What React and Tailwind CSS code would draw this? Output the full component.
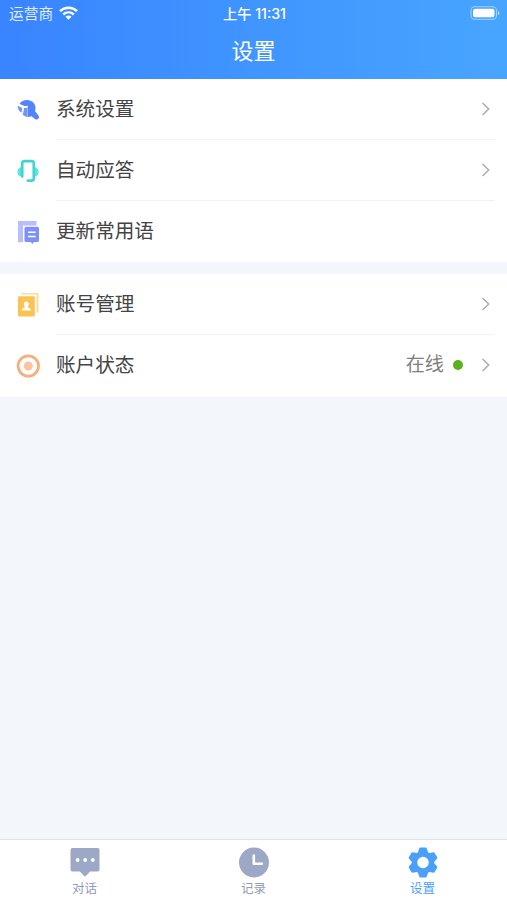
import React from "react";

const SystemIcon = () => (
  <svg width="24" height="24" viewBox="0 0 24 24">
    <path d="M3.5 6C6 1.6 12.2.6 16.2 3.6c3.2 2.4 4 6 2.8 9.4l3.4 4.4c1.9 2.6-1.1 5.4-3.5 3.6l-3.4-2.7c-1.2.6-2.6.9-4 .8V9.3Z" fill="#5584fa" />
    <path d="M1.6 7.8l4.6 2.1-.6 4.9c-2.600-1.400-3.900-4-4-7ZM7.600 10.300l3.500-.9v9.500c-1.900-.2-3.400-1.100-4.500-2.300Z" fill="#6d96fb" />
    <path d="M3 6.500l5.300 2.500 3.500-.5M7.400 9.200l-.9 6.300" stroke="#fff" strokeWidth="1.300" fill="none" />
  </svg>
);

const HeadsetIcon = () => (
  <svg width="24" height="24" viewBox="0 0 24 24">
    <path d="M5.300 8.200C2.700 8.600 1.400 10.300 1.400 13s1.300 4.200 3.900 4.500ZM18.700 8.200c2.600.4 3.900 2.100 3.900 4.800s-1.300 4.200-3.900 4.500Z" fill="#62e3e1" />
    <path d="M6.200 17.500V4.400c0-1.400.8-2.200 2.200-2.200h7.200c1.400 0 2.200.8 2.200 2.200v14.800c0 1.500-.8 2.400-2.300 2.400h-3.700" fill="none" stroke="#3dd6d5" strokeWidth="2.700" strokeLinecap="round" />
  </svg>
);

const PhraseIcon = () => (
  <svg width="24" height="24" viewBox="0 0 24 24">
    <path d="M2 1h18.500v4.500H7V22.300H2Z" fill="#b5bffb" />
    <path d="M10 6.800h11.500a1.500 1.500 0 0 1 1.500 1.500v12.200a1.500 1.500 0 0 1-1.500 1.500h-3.600L16.500 24l-1.800-2H10a1.500 1.500 0 0 1-1.500-1.500V8.300A1.500 1.500 0 0 1 10 6.800Z" fill="#7f90f8" />
    <path d="M12 12.300h7.600M12 16.600h7.600" stroke="#fff" strokeWidth="1.500" />
  </svg>
);

const AccountIcon = () => (
  <svg width="24" height="24" viewBox="0 0 24 24">
    <path d="M5.500.5h16v19" fill="none" stroke="#fddb9a" strokeWidth="2" />
    <rect x="2" y="3.300" width="16.800" height="20.300" rx="1" fill="#fbc352" />
    <circle cx="10.300" cy="11" r="2.500" fill="#fff" />
    <path d="M9 12h2.600l.5 2.600c1.900.6 2.800 1.500 2.800 3H5.800c0-1.500.9-2.400 2.700-3Z" fill="#fff" />
  </svg>
);

const StatusIcon = () => (
  <svg width="24" height="24" viewBox="0 0 24 24">
    <circle cx="12.300" cy="12" r="10.200" fill="none" stroke="#f8ae7b" strokeWidth="2.700" />
    <circle cx="12.300" cy="12" r="4.500" fill="#fbc29d" />
  </svg>
);

const Chevron = () => (
  <svg width="10" height="14" viewBox="0 0 10 14" className="shrink-0">
    <path d="M1.500 1.100L7.700 7l-6.200 5.900" fill="none" stroke="#aaa" strokeWidth="1.400" />
  </svg>
);

const DialogIcon = () => (
  <svg width="32" height="32" viewBox="0 0 32 32">
    <path d="M3.500 2h25a2 2 0 0 1 2 2v19.500a2 2 0 0 1-2 2h-7.300L16 30.800l-5.200-5.300H3.500a2 2 0 0 1-2-2V4a2 2 0 0 1 2-2Z" fill="#9ca8c5" />
    <circle cx="8.600" cy="14" r="1.900" fill="#fff" />
    <circle cx="16.200" cy="14" r="1.900" fill="#fff" />
    <circle cx="23.800" cy="14" r="1.900" fill="#fff" />
  </svg>
);

const ClockIcon = () => (
  <svg width="32" height="32" viewBox="0 0 32 32">
    <circle cx="16" cy="16.500" r="15" fill="#9ca8c5" />
    <path d="M15.800 9.500v8.200h8" fill="none" stroke="#fff" strokeWidth="2.600" strokeLinecap="round" strokeLinejoin="round" />
  </svg>
);

const GearIcon = () => (
  <svg width="32" height="32" viewBox="0 0 32 32">
    <g transform="translate(16 16.500)" fill="#4a9ffa">
      <circle r="8.500" fill="none" stroke="#4a9ffa" strokeWidth="5.500" />
      {[0, 60, 120, 180, 240, 300].map((angle) => (
        <path key={angle} transform={`rotate(${angle})`} d="M-5.600-8.500L-3.800-13.900Q-3.500-14.900-2.500-14.900H2.500Q3.500-14.900 3.800-13.900L5.600-8.500Z" />
      ))}
    </g>
  </svg>
);

function Row({ icon, label, status, chevron = true, divider = true }) {
  return (
    <div className="flex h-[61px] items-center pl-4">
      {icon}
      <div className={`ml-4 mr-3 flex h-full flex-1 items-center border-b pr-1 ${divider ? "border-[#f2f2f2]" : "border-transparent"}`}>
        <span className="flex-1 text-[19.600px] leading-6 text-[#444]">{label}</span>
        {status && (
          <span className="mr-[18px] flex items-center gap-[9px] text-[19.200px] leading-6 text-[#808080]">
            {status}
            <span className="h-[10px] w-[10px] rounded-full bg-[#5bb11c]" />
          </span>
        )}
        {chevron && <Chevron />}
      </div>
    </div>
  );
}

function Tab({ icon, label, active }) {
  return (
    <div className={`flex flex-1 flex-col items-center pt-[6px] text-[12.500px] leading-[18px] ${active ? "text-[#4a9ffa]" : "text-[#929dba]"}`}>
      {icon}
      <span className="mt-[2px]">{label}</span>
    </div>
  );
}

export default function App() {
  return (
    <div className="flex h-[900px] w-[507px] flex-col overflow-hidden bg-[#f3f7fb] font-['Liberation_Sans','Noto_Sans_CJK_SC',sans-serif]">
      <header className="h-[79px] shrink-0 bg-linear-to-r from-[#3984ff] to-[#48a5ff] text-white">
        <div className="grid h-7 grid-cols-3 items-center pl-[9px] pr-[7px] text-[14.700px] leading-5">
          <div className="flex items-center gap-[6px] text-white/85">
            <span>运营商</span>
            <svg width="19" height="14" viewBox="0 0 19 14" fill="none" stroke="#fff" strokeWidth="2.400" className="mb-[2px]">
              <path d="M1 5.200C5.800.6 13.200.6 18 5.200M4.200 8.500c3.100-2.900 7.500-2.900 10.600 0" />
              <path d="M6.500 10.700c1.700-1.600 4.300-1.600 6 0L9.500 13.800Z" fill="#fff" stroke="none" />
            </svg>
          </div>
          <div className="text-center font-['Inter','Noto_Sans_CJK_SC',sans-serif] text-[14.200px] font-medium whitespace-nowrap">上午 11:31</div>
          <svg width="30" height="14" viewBox="0 0 30 14" className="mb-[2px] justify-self-end">
            <rect x="1" y=".8" width="25.500" height="12.400" rx="3.800" fill="none" stroke="#fff" strokeOpacity=".5" strokeWidth="1.100" />
            <rect x="3" y="2.700" width="21.500" height="8.600" rx="2.200" fill="#fff" />
            <path d="M28 5v4c2-.8 2-3.200 0-4Z" fill="#fff" fillOpacity=".6" />
          </svg>
        </div>
        <h1 className="flex h-12 items-center justify-center text-[22px] leading-8">设置</h1>
      </header>
      <section className="bg-white">
        <Row icon={<SystemIcon />} label="系统设置" />
        <Row icon={<HeadsetIcon />} label="自动应答" />
        <Row icon={<PhraseIcon />} label="更新常用语" chevron={false} divider={false} />
      </section>
      <section className="mt-3 bg-white pb-px">
        <Row icon={<AccountIcon />} label="账号管理" />
        <Row icon={<StatusIcon />} label="账户状态" status="在线" divider={false} />
      </section>
      <nav className="mt-auto flex h-[61px] shrink-0 border-t border-[#e0e3e6] bg-white">
        <Tab icon={<DialogIcon />} label="对话" />
        <Tab icon={<ClockIcon />} label="记录" />
        <Tab icon={<GearIcon />} label="设置" active />
      </nav>
    </div>
  );
}
